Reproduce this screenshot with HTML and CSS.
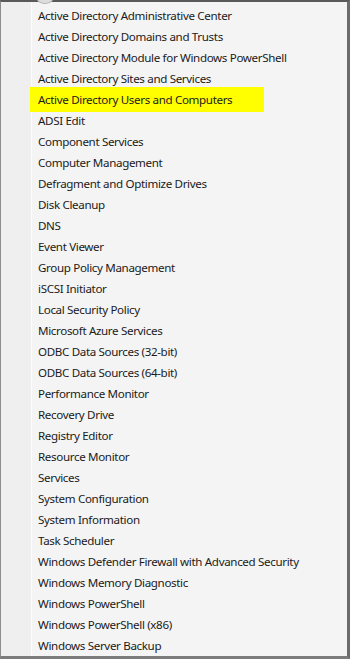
FILE: index.html
```html
<!DOCTYPE html>
<html lang="en">
<head>
  <meta charset="UTF-8" />
  <title>Administrative Tools</title>
  <link rel="stylesheet" href="styles.css">
</head>
<body>
  <div class="menu">
    <div class="knob"></div>
    <div class="gutter"></div>
    <ul class="list">
      <li>Active Directory Administrative Center</li>
      <li>Active Directory Domains and Trusts</li>
      <li>Active Directory Module for Windows PowerShell</li>
      <li>Active Directory Sites and Services</li>
      <li class="hl">Active Directory Users and Computers</li>
      <li>ADSI Edit</li>
      <li>Component Services</li>
      <li>Computer Management</li>
      <li>Defragment and Optimize Drives</li>
      <li>Disk Cleanup</li>
      <li>DNS</li>
      <li>Event Viewer</li>
      <li>Group Policy Management</li>
      <li>iSCSI Initiator</li>
      <li>Local Security Policy</li>
      <li>Microsoft Azure Services</li>
      <li>ODBC Data Sources (32-bit)</li>
      <li>ODBC Data Sources (64-bit)</li>
      <li>Performance Monitor</li>
      <li>Recovery Drive</li>
      <li>Registry Editor</li>
      <li>Resource Monitor</li>
      <li>Services</li>
      <li>System Configuration</li>
      <li>System Information</li>
      <li>Task Scheduler</li>
      <li>Windows Defender Firewall with Advanced Security</li>
      <li>Windows Memory Diagnostic</li>
      <li>Windows PowerShell</li>
      <li>Windows PowerShell (x86)</li>
      <li>Windows Server Backup</li>
    </ul>
  </div>
</body>
</html>
```

FILE: styles.css
```css
* {
  box-sizing: border-box;
}

body {
  margin: 0;
  padding: 0;
  font-family: 'Noto Sans', 'Open Sans', sans-serif;
  background: #fff;
}

.menu {
  position: relative;
  display: flex;
  width: 350px;
  height: 659px;
  background: #f4f4f4;
  border-top: 2px solid #5a5a5a;
  border-left: 1px solid #8c8c8c;
  border-right: 3px solid #6c6c6c;
  border-bottom: 3px solid #7c7c7c;
}

/* bit of the button peeking in from above */
.knob {
  position: absolute;
  top: -8px;
  left: 36px;
  width: 16px;
  height: 10px;
  border-radius: 50%;
  border: 1px solid #b5b5b5;
  background: #dcdcdc;
}

.gutter {
  width: 31px;
  flex: none;
  background: #efefef;
  border-right: 1px solid #fcfcfc;
}

.list {
  list-style: none;
  margin: 0;
  padding: 3px 0 0 6px;
  flex: 1;
}

.list li {
  height: 21px;
  line-height: 21px;
  font-size: 11.6px;
  letter-spacing: -0.35px;
  color: #1b1b1b;
  white-space: nowrap;
}

/* marker highlight, a little taller than the row */
.list li.hl {
  width: 234px;
  margin-left: -8px;
  padding-left: 8px;
  background: #ffff00;
  box-shadow: 0 -2px 0 #ffff00, 0 2px 0 #ffff00;
}
```
